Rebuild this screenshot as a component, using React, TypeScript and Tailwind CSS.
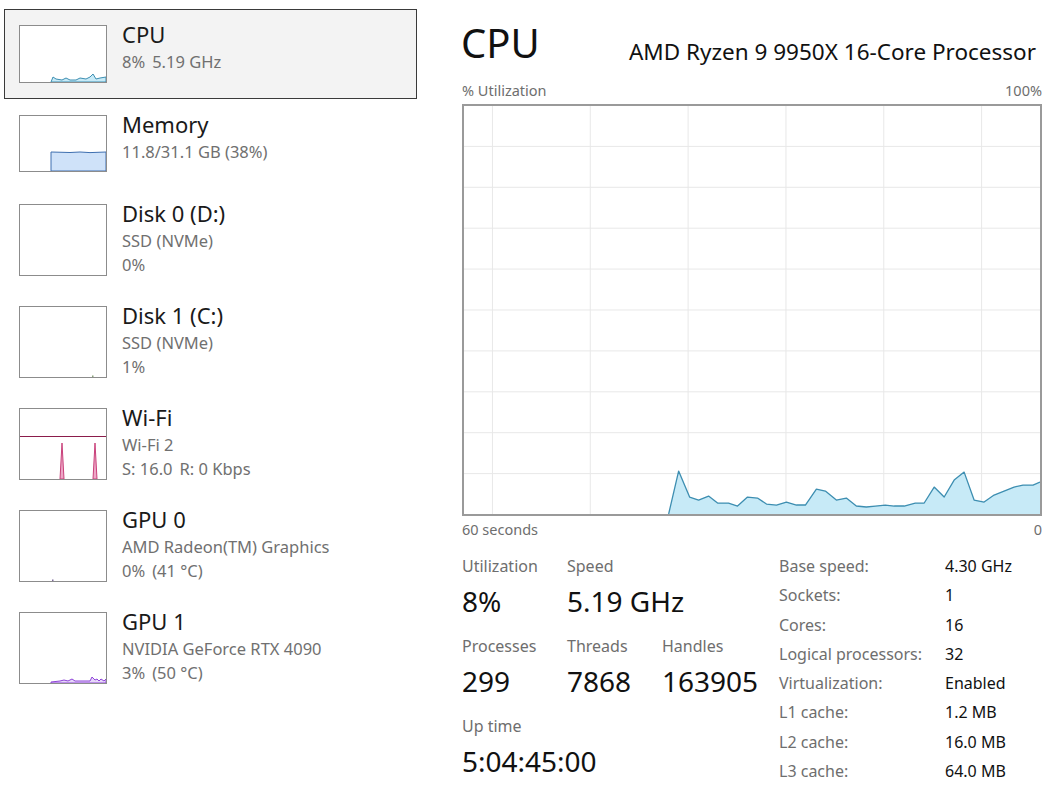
import { FC, ReactNode } from 'react';

const font = { fontFamily: '"Noto Sans", "Open Sans", sans-serif' };

interface DeviceItem {
    title: string;
    lines: string[][];
    selected?: boolean;
    height: string;
    thumbHeight: string;
    thumb: ReactNode;
}

const CpuThumb = () => (
    <svg width="86" height="56" viewBox="0 0 86 56" className="block">
        <path
            d="M31,56 L33,51 L36,53 L42,54 L46,52 L50,54 L56,54 L60,52 L66,53 L70,51 L73,48 L76,53 L80,52 L86,51 V56 Z"
            fill="#c7eaf7"
            stroke="#3d8eb1"
            strokeWidth="1"
        />
    </svg>
);

const MemoryThumb = () => (
    <svg width="86" height="55" viewBox="0 0 86 55" className="block">
        <path
            d="M31,55 V36 L50,36.5 L60,36 L70,36.6 L86,36 V55 Z"
            fill="#cfe2f9"
            stroke="#3e6fb0"
            strokeWidth="1"
        />
    </svg>
);

const DiskThumb: FC<{ mark?: boolean }> = ({ mark }) => (
    <svg width="86" height="70" viewBox="0 0 86 70" className="block">
        {mark && <rect x="72" y="68.5" width="1.5" height="1.5" fill="#8aa27a" />}
    </svg>
);

const WifiThumb = () => (
    <svg width="86" height="70" viewBox="0 0 86 70" className="block">
        <line x1="0" y1="27.5" x2="86" y2="27.5" stroke="#8b1c4b" strokeWidth="1" />
        <path d="M40,70 L42,34 L44,70 Z" fill="#eda6c6" stroke="#c8407a" strokeWidth="1" />
        <path d="M73,70 L75,34 L77,70 Z" fill="#eda6c6" stroke="#c8407a" strokeWidth="1" />
    </svg>
);

const Gpu0Thumb = () => (
    <svg width="86" height="70" viewBox="0 0 86 70" className="block">
        <rect x="32" y="68.5" width="1.5" height="1.5" fill="#7d6a9a" />
    </svg>
);

const Gpu1Thumb = () => (
    <svg width="86" height="70" viewBox="0 0 86 70" className="block">
        <path
            d="M31,70 L31,69 L40,68 L44,67 L48,68 L52,66 L55,68 L62,68 L70,68 L72,64 L75,67 L77,66 L79,68 L81,66 L84,68 L86,66 V70 Z"
            fill="#e7d6fa"
            stroke="#8e44d8"
            strokeWidth="1"
        />
    </svg>
);

const items: DeviceItem[] = [
    {
        title: 'CPU',
        lines: [['8%', '5.19 GHz']],
        selected: true,
        height: 'h-[90px]',
        thumbHeight: 'h-[58px]',
        thumb: <CpuThumb />
    },
    {
        title: 'Memory',
        lines: [['11.8/31.1 GB (38%)']],
        height: 'h-[89px]',
        thumbHeight: 'h-[57px]',
        thumb: <MemoryThumb />
    },
    {
        title: 'Disk 0 (D:)',
        lines: [['SSD (NVMe)'], ['0%']],
        height: 'h-[102px]',
        thumbHeight: 'h-[72px]',
        thumb: <DiskThumb />
    },
    {
        title: 'Disk 1 (C:)',
        lines: [['SSD (NVMe)'], ['1%']],
        height: 'h-[102px]',
        thumbHeight: 'h-[72px]',
        thumb: <DiskThumb mark />
    },
    {
        title: 'Wi-Fi',
        lines: [['Wi-Fi 2'], ['S: 16.0', 'R: 0 Kbps']],
        height: 'h-[102px]',
        thumbHeight: 'h-[72px]',
        thumb: <WifiThumb />
    },
    {
        title: 'GPU 0',
        lines: [['AMD Radeon(TM) Graphics'], ['0%', '(41 °C)']],
        height: 'h-[102px]',
        thumbHeight: 'h-[72px]',
        thumb: <Gpu0Thumb />
    },
    {
        title: 'GPU 1',
        lines: [['NVIDIA GeForce RTX 4090'], ['3%', '(50 °C)']],
        height: 'h-[102px]',
        thumbHeight: 'h-[72px]',
        thumb: <Gpu1Thumb />
    }
];

const cpuPoints: [number, number][] = [
    [206, 410], [216, 367], [227, 393], [236, 396], [246, 392], [255, 399],
    [266, 399], [275, 402], [285, 393], [295, 394], [304, 400], [314, 401],
    [324, 398], [334, 401], [343, 401], [354, 385], [363, 387], [374, 396],
    [384, 394], [394, 402], [404, 403], [413, 402], [423, 401], [432, 402],
    [442, 402], [453, 399], [462, 399], [472, 383], [482, 393], [492, 376],
    [502, 368], [512, 396], [522, 398], [532, 391], [542, 387], [552, 383],
    [561, 381], [571, 381], [578, 378]
];

const DeviceRow: FC<{ item: DeviceItem }> = ({ item }) => (
    <div
        className={`flex w-[413px] border ${item.height} ${
            item.selected ? 'border-[#3a3a3a] bg-[#f3f3f3]' : 'border-transparent'
        }`}
    >
        <div
            className={`ml-[14px] mt-[15px] w-[88px] ${item.thumbHeight} border border-[#8c8c8c] bg-white overflow-hidden`}
        >
            {item.thumb}
        </div>
        <div className="ml-[15px] mt-[13px] flex flex-col">
            <span className="text-[22px] leading-[22px] text-[#1a1a1a]">{item.title}</span>
            <div className="mt-[5px] flex flex-col">
                {item.lines.map((parts, i) => (
                    <div key={i} className="flex gap-[7px] text-[16.5px] leading-[24px] text-[#707070]">
                        {parts.map((p) => (
                            <span key={p}>{p}</span>
                        ))}
                    </div>
                ))}
            </div>
        </div>
    </div>
);

const CpuGraph = () => {
    const line = cpuPoints.map(([x, y]) => `${x},${y}`).join(' L');
    const verticals = [29, 127, 225, 323, 421, 519];
    const horizontals = [41, 82, 123, 164, 205, 246, 287, 328, 369];
    return (
        <div className="mt-[4px] w-[580px] h-[412px] border-2 border-[#9a9a9a] bg-white">
            <svg width="576" height="408" viewBox="1 1 577 409" preserveAspectRatio="none" className="block">
                {verticals.map((x) => (
                    <line key={`v${x}`} x1={x + 0.5} y1="0" x2={x + 0.5} y2="410" stroke="#e8e8e8" strokeWidth="1" />
                ))}
                {horizontals.map((y) => (
                    <line key={`h${y}`} x1="0" y1={y + 0.5} x2="578" y2={y + 0.5} stroke="#e8e8e8" strokeWidth="1" />
                ))}
                <path d={`M${line} V410 Z`} fill="#c7eaf7" stroke="none" />
                <path d={`M${line}`} fill="none" stroke="#3d8eb1" strokeWidth="1.3" strokeLinejoin="round" />
            </svg>
        </div>
    );
};

const Stat: FC<{ label: string; value: string }> = ({ label, value }) => (
    <div className="flex flex-col">
        <span className="text-[16px] leading-[20px] text-[#6e6e6e]">{label}</span>
        <span className="text-[28px] leading-[50px] text-[#111]">{value}</span>
    </div>
);

const specs: [string, string][] = [
    ['Base speed:', '4.30 GHz'],
    ['Sockets:', '1'],
    ['Cores:', '16'],
    ['Logical processors:', '32'],
    ['Virtualization:', 'Enabled'],
    ['L1 cache:', '1.2 MB'],
    ['L2 cache:', '16.0 MB'],
    ['L3 cache:', '64.0 MB']
];

export default function App() {
    return (
        <div className="flex w-[1061px] h-[800px] bg-white overflow-hidden" style={font}>
            <aside className="w-[462px] shrink-0 pl-[4px] pt-[9px] flex flex-col">
                {items.map((item) => (
                    <DeviceRow key={item.title} item={item} />
                ))}
            </aside>

            <main className="w-[580px] flex flex-col">
                <header className="pt-[18px] flex items-baseline justify-between">
                    <span className="text-[40px] leading-[48px] text-[#111] relative top-[1px] -left-[1px]">CPU</span>
                    <span className="pr-[6px] text-[22.5px] text-[#111] relative top-[3px]">
                        AMD Ryzen 9 9950X 16-Core Processor
                    </span>
                </header>

                <div className="mt-[14px] flex justify-between text-[14.5px] leading-[20px] text-[#6e6e6e]">
                    <span>% Utilization</span>
                    <span>100%</span>
                </div>

                <CpuGraph />

                <div className="mt-[3px] flex justify-between text-[14.5px] leading-[20px] text-[#6e6e6e]">
                    <span>60 seconds</span>
                    <span>0</span>
                </div>

                <section className="mt-[13px] flex">
                    <div className="w-[317px] pt-[4px] grid grid-cols-[105px_95px_117px] gap-y-[10px]">
                        <Stat label="Utilization" value="8%" />
                        <div className="col-span-2">
                            <Stat label="Speed" value="5.19 GHz" />
                        </div>
                        <Stat label="Processes" value="299" />
                        <Stat label="Threads" value="7868" />
                        <Stat label="Handles" value="163905" />
                        <div className="col-span-3">
                            <Stat label="Up time" value="5:04:45:00" />
                        </div>
                    </div>
                    <div className="flex flex-col text-[16px] leading-[29.3px]">
                        {specs.map(([k, v]) => (
                            <div key={k} className="flex">
                                <span className="w-[166px] text-[#6e6e6e]">{k}</span>
                                <span className="text-[#111]">{v}</span>
                            </div>
                        ))}
                    </div>
                </section>
            </main>
        </div>
    );
}
